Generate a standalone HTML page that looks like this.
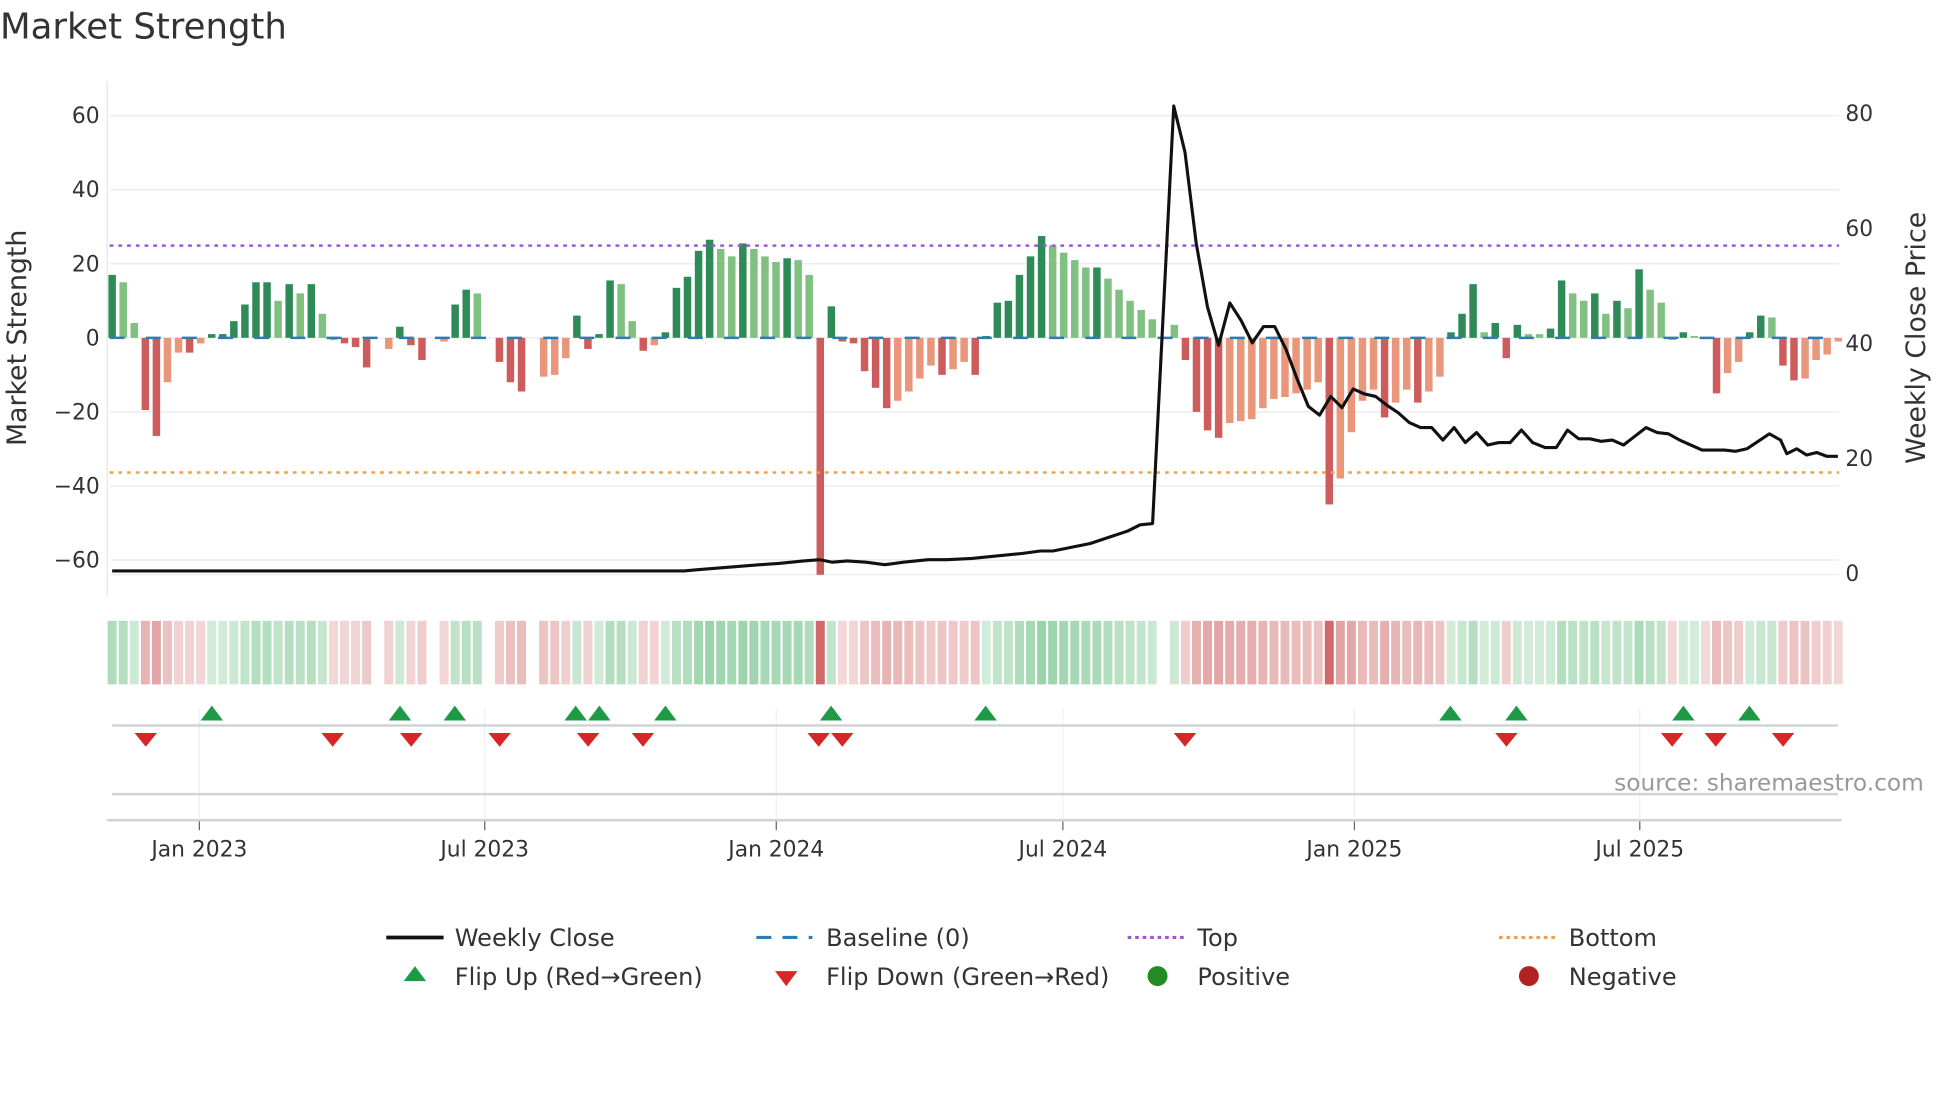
<!DOCTYPE html>
<html><head><meta charset="utf-8"><style>
html,body{margin:0;padding:0;background:#fff;}
svg{display:block;font-family:"DejaVu Sans","Liberation Sans",sans-serif;}
</style></head><body>
<svg id="s" width="1960" height="1102" viewBox="0 0 1573 884" preserveAspectRatio="none" xmlns="http://www.w3.org/2000/svg">
<text x="0" y="31" font-size="28.5" fill="#333">Market Strength</text>
<g id="grid" stroke="#ebedf0" stroke-width="1.2"></g>
<line x1="86" y1="65" x2="86" y2="478" stroke="#e6e6e6" stroke-width="1"/>
<g id="bars"></g>
<line x1="88" y1="197" x2="1476" y2="197" stroke="#9b59d6" stroke-width="2" stroke-dasharray="3,4"/>
<line x1="88" y1="379" x2="1476" y2="379" stroke="#f0a050" stroke-width="2" stroke-dasharray="3,4"/>
<line x1="88" y1="271" x2="1476" y2="271" stroke="#2f7bb5" stroke-width="2" stroke-dasharray="12,17"/>
<polyline id="price" fill="none" stroke="#111" stroke-width="2.5" stroke-linejoin="round"/>
<g id="ticks" font-size="17.5" fill="#333"></g>
<text transform="translate(21,271) rotate(-90)" text-anchor="middle" font-size="21.5" fill="#333">Market Strength</text>
<text transform="translate(1545,271) rotate(-90)" text-anchor="middle" font-size="21.5" fill="#333">Weekly Close Price</text>
<g id="strip"></g>
<g id="lower"></g>
<text x="1544" y="634" text-anchor="end" font-size="18.7" fill="#999">source: sharemaestro.com</text>
<g font-size="19.3" fill="#333">
<line x1="310" y1="752" x2="356" y2="752" stroke="#111" stroke-width="3"/>
<text x="365" y="759">Weekly Close</text>
<line x1="607" y1="752" x2="652" y2="752" stroke="#2f7bb5" stroke-width="2.5" stroke-dasharray="12,9"/>
<text x="663" y="759">Baseline (0)</text>
<line x1="905" y1="752" x2="950" y2="752" stroke="#9b59d6" stroke-width="2.5" stroke-dasharray="3,3"/>
<text x="961" y="759">Top</text>
<line x1="1203" y1="752" x2="1248" y2="752" stroke="#f0a050" stroke-width="2.5" stroke-dasharray="3,3"/>
<text x="1259" y="759">Bottom</text>
<polygon points="333,775 324,787 342,787" fill="#1e9a46"/>
<text x="365" y="790">Flip Up (Red→Green)</text>
<polygon points="622,779 640,779 631,791" fill="#d62728"/>
<text x="663" y="790">Flip Down (Green→Red)</text>
<circle cx="929" cy="783" r="8" fill="#228b22"/>
<text x="961" y="790">Positive</text>
<circle cx="1227" cy="783" r="8" fill="#b22222"/>
<text x="1259" y="790">Negative</text>
</g>
</svg>
<script>
var NS="http://www.w3.org/2000/svg";
function el(p,t,a,txt){var e=document.createElementNS(NS,t);for(var k in a)e.setAttribute(k,a[k]);if(txt!==undefined)e.textContent=txt;document.getElementById(p).appendChild(e);return e;}
var d="17D 15L 4L -19.5R -26.5R -12O -4O -4R -1.5O 1D 1D 4.5D 9D 15D 15D 10L 14.5D 12L 14.5D 6.5L -0.5R -1.5R -2.5R -8R 0 -3O 3D -2R -6R 0 -1O 9D 13D 12L 0 -6.5R -12R -14.5R 0 -10.5O -10O -5.5O 6D -3R 1D 15.5D 14.5L 4.5L -3.5R -2O 1.5D 13.5D 16.5D 23.5D 26.5D 24L 22L 25.5D 24L 22L 20.5L 21.5D 21L 17L -64R 8.5D -1R -1.5R -9R -13.5R -19R -17O -14.5O -11O -7.5O -10R -8.5O -6.5O -10R 0.5D 9.5D 10D 17D 22D 27.5D 25L 23L 21L 19L 19D 16L 13L 10L 7.5L 5L 0 3.5L -6R -20R -25R -27R -23O -22.5O -22O -19O -16.5O -16O -15O -14O -12O -45R -38O -25.5O -17O -14O -21.5R -17.5O -14O -17.5R -14.5O -10.5O 1.5D 6.5D 14.5D 1.5L 4D -5.5R 3.5D 1L 1L 2.5D 15.5D 12L 10L 12D 6.5L 10D 8L 18.5D 13L 9.5L -0.5R 1.5D 0.5L -0.3R -15R -9.5O -6.5O 1.5D 6D 5.5L -7.5R -11.5R -11O -6O -4.5O -1O".split(" ");
var col={D:"#2e8b57",L:"#80c080",R:"#cd5c5c",O:"#e9967a"};
[60,40,20,0,-20,-40,-60].forEach(function(v){var y=271-2.97*v;el("grid","line",{x1:88,y1:y,x2:1476,y2:y});
el("ticks","text",{x:80,y:y+6,"text-anchor":"end"},(v<0?"\u2212":"")+Math.abs(v));});
el("grid","line",{x1:88,y1:461,x2:1476,y2:461});
[80,60,40,20,0].forEach(function(p){var y=460-4.61*p;el("ticks","text",{x:1481,y:y+6},p);});
d.forEach(function(s,i){var v=parseFloat(s),t=s.replace(/[-0-9.]/g,"")||"D";var x=90+i*8.88;
if(v!==0){var y0=271,y1=271-2.97*v;el("bars","rect",{x:x-3,y:Math.min(y0,y1),width:6,height:Math.max(Math.abs(y1-y0),1),fill:col[t]});
var a=Math.abs(v)>40?0.85:0.22+0.3*Math.min(Math.abs(v)/27,1);
el("strip","rect",{x:x-3.6,y:498,width:7.2,height:51,fill:v>0?"rgb(60,170,90)":"rgb(200,80,80)","fill-opacity":a});}});
var pts="90,458 549,458 560,457 585,455 610,453 625,452 645,450 658,449 668,451 680,450 695,451 710,453 725,451 745,449 760,449 780,448 800,446 820,444 835,442 845,442 860,439 875,436 890,431 905,426 915,421 925,420 942,85 951,122 960,195 969,246 978,277 987,243 996,257 1005,275 1014,262 1023,262 1032,280 1041,304 1050,326 1059,333 1068,318 1077,327 1086,312 1095,316 1104,318 1113,325 1122,331 1131,339 1140,343 1149,343 1158,353 1167,343 1176,355 1185,347 1194,357 1203,355 1212,355 1221,345 1230,355 1240,359 1249,359 1258,345 1267,352 1276,352 1285,354 1294,353 1303,357 1312,350 1321,343 1330,347 1339,348 1348,353 1357,357 1366,361 1375,361 1384,361 1393,362 1402,360 1411,354 1420,348 1429,353 1434,364 1442,360 1450,365 1458,363 1466,366 1475,366";
document.getElementById("price").setAttribute("points",pts);
var dates=[[160,"Jan 2023"],[389,"Jul 2023"],[623,"Jan 2024"],[853,"Jul 2024"],[1087,"Jan 2025"],[1316,"Jul 2025"]];
dates.forEach(function(q){el("lower","line",{x1:q[0],y1:568,x2:q[0],y2:658,stroke:"#eef0f2","stroke-width":1});
el("lower","line",{x1:q[0],y1:658,x2:q[0],y2:666,stroke:"#666","stroke-width":1});
el("lower","text",{x:q[0],y:687,"text-anchor":"middle","font-size":17.5,fill:"#333"},q[1]);});
el("lower","line",{x1:90,y1:582,x2:1475,y2:582,stroke:"#d0d3d6","stroke-width":2});
el("lower","line",{x1:90,y1:637,x2:1475,y2:637,stroke:"#d0d3d6","stroke-width":2});
el("lower","line",{x1:86,y1:658,x2:1478,y2:658,stroke:"#d0d3d6","stroke-width":2});
[170,321,365,462,481,534,667,791,1164,1217,1351,1404].forEach(function(x){el("lower","polygon",{points:(x)+",566 "+(x-9)+",578 "+(x+9)+",578",fill:"#1e9a46"});});
[117,267,330,401,472,516,657,676,951,1209,1342,1377,1431].forEach(function(x){el("lower","polygon",{points:(x-9)+",588 "+(x+9)+",588 "+x+",599",fill:"#d62728"});});
</script>
</body></html>
